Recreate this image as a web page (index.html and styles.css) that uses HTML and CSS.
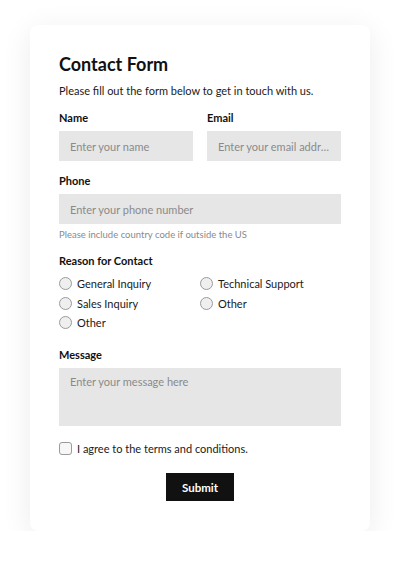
FILE: index.html
```html
<!DOCTYPE html>
<html lang="en">
<head>
    <meta charset="UTF-8">
    <meta name="viewport" content="width=device-width, initial-scale=1.0">
    <title>Contact Form</title>
    <link rel="stylesheet" href="styles.css">
</head>
<body>

    <div class="card">
        <h1>Contact Form</h1>
        <p class="intro">Please fill out the form below to get in touch with us.</p>
        <form id="contactForm">
            <div class="row">
                <div class="form-group">
                    <label for="name">Name</label>
                    <input type="text" id="name" name="name" placeholder="Enter your name">
                </div>
                <div class="form-group">
                    <label for="email">Email</label>
                    <input type="email" id="email" name="email" placeholder="Enter your email address">
                </div>
            </div>
            <div class="form-group">
                <label for="phone">Phone</label>
                <input type="tel" id="phone" name="phone" placeholder="Enter your phone number">
                <p class="hint">Please include country code if outside the US</p>
            </div>
            <div class="form-group radio-group">
                <span class="label">Reason for Contact</span>
                <div class="options">
                    <label class="option"><input type="radio" name="reason" value="general"> General Inquiry</label>
                    <label class="option"><input type="radio" name="reason" value="technical"> Technical Support</label>
                    <label class="option"><input type="radio" name="reason" value="sales"> Sales Inquiry</label>
                    <label class="option"><input type="radio" name="reason" value="other"> Other</label>
                    <label class="option"><input type="radio" name="reason" value="other2"> Other</label>
                </div>
            </div>
            <div class="form-group">
                <label for="message">Message</label>
                <textarea id="message" name="message" placeholder="Enter your message here"></textarea>
            </div>
            <label class="option agree"><input type="checkbox" name="agree"> I agree to the terms and conditions.</label>
            <div class="actions">
                <button type="submit">Submit</button>
            </div>
        </form>
    </div>

</body>
</html>
```
FILE: styles.css
```css
body {
    font-family: Lato, "Open Sans", sans-serif;
    background-color: #fff;
    color: #1a1a1a;
    margin: 0;
}
.card {
    width: 340px;
    box-sizing: border-box;
    margin: 25px auto 0;
    padding: 28px 29px 30px;
    background: #fff;
    border-radius: 8px;
    box-shadow: 0 6px 30px rgba(0, 0, 0, 0.08);
}
h1 {
    margin: 0;
    font-size: 18px;
    line-height: 22px;
    font-weight: 700;
    color: #111;
}
.intro {
    margin: 9px 0 0;
    font-size: 11px;
    line-height: 14px;
}
form {
    margin-top: 13px;
}
.row {
    display: grid;
    grid-template-columns: 1fr 1fr;
    column-gap: 14px;
}
.form-group {
    margin-bottom: 13px;
}
.form-group > label,
.label {
    display: block;
    margin-bottom: 6px;
    font-size: 11px;
    line-height: 14px;
    font-weight: 700;
    color: #111;
}
input[type="text"],
input[type="email"],
input[type="tel"],
textarea {
    display: block;
    width: 100%;
    box-sizing: border-box;
    height: 30px;
    padding: 0 11px;
    border: none;
    border-radius: 0;
    background-color: #e6e6e6;
    font-family: inherit;
    font-size: 11px;
    color: #1a1a1a;
    text-overflow: ellipsis;
    outline: none;
}
textarea {
    height: 58px;
    padding: 7px 11px;
    line-height: 14px;
    resize: none;
}
::placeholder {
    color: #8a8a8a;
}
.hint {
    margin: 5px 0 0;
    font-size: 9.5px;
    line-height: 12px;
    color: #8a8a8a;
}
.radio-group {
    margin-bottom: 18px;
}
.radio-group .label {
    margin-bottom: 8px;
}
.options {
    display: grid;
    grid-template-columns: 1fr 1fr;
    row-gap: 4.5px;
}
.option {
    display: flex;
    align-items: center;
    height: 15px;
    font-size: 11px;
    color: #1a1a1a;
}
.option input {
    appearance: none;
    width: 13px;
    height: 13px;
    margin: 0 5px 0 0;
    border: 1px solid #9a9a9a;
    background: #efefef;
    box-sizing: border-box;
    flex-shrink: 0;
}
.option input[type="radio"] {
    border-radius: 50%;
}
.option input[type="checkbox"] {
    border-radius: 3px;
    background: #f7f7f7;
}
.agree {
    height: 16px;
    margin-top: 14px;
}
.actions {
    display: flex;
    justify-content: center;
    margin-top: 17px;
}
button {
    width: 68px;
    height: 28px;
    padding: 0;
    background-color: #111;
    color: #fff;
    border: none;
    border-radius: 0;
    font-family: inherit;
    font-size: 11.5px;
    font-weight: 700;
    cursor: pointer;
}
```
